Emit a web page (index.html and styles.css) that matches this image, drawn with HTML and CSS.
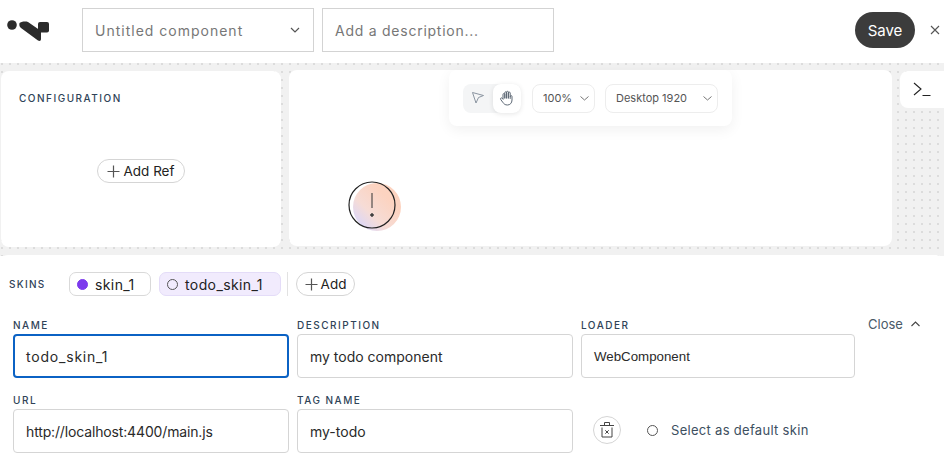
FILE: index.html
```html
<!DOCTYPE html>
<html>

<head>
    <title>Untitled component</title>
    <link rel="stylesheet" href="styles.css">
</head>

<body>
    <header class="topbar">
        <svg class="logo" width="50" height="24" viewBox="0 0 50 24">
            <circle cx="12" cy="7" r="4.800" fill="#2b2b2b" />
            <path d="M19.500 5C20.500 4 25 3 28 4L41 13V21C41 23 39.500 23.500 38 22.500L21 10C19.500 9 19 7 19.500 5z" fill="#2b2b2b" />
            <rect x="38" y="4" width="11" height="10.500" rx="2" fill="#2b2b2b" />
        </svg>
        <div class="name-select">
            <span>Untitled component</span>
            <svg width="10" height="6" viewBox="0 0 10 6"><path d="M1 1l4 4 4-4" fill="none" stroke="#555" stroke-width="1.200" /></svg>
        </div>
        <div class="desc-input">Add a description...</div>
        <button class="save-btn">Save</button>
        <svg class="close-x" width="10" height="10" viewBox="0 0 10 10"><path d="M1 1l8 8M9 1l-8 8" stroke="#555" stroke-width="1.100" /></svg>
    </header>

    <main class="workspace">
        <section class="config-panel">
            <h3 class="config-title">CONFIGURATION</h3>
            <button class="pill add-ref">
                <svg width="13" height="13" viewBox="0 0 13 13"><path d="M6.500 .5v12M.5 6.500h12" stroke="#555" stroke-width="1.200" /></svg>
                Add Ref
            </button>
        </section>

        <section class="canvas-panel">
            <div class="canvas-tools">
                <div class="mode-switch">
                    <span class="mode-btn first">
                        <svg width="14" height="14" viewBox="0 0 14 14"><path d="M1.500 1.500l11 3-5 2-2.500 5.500z" fill="none" stroke="#8a94a0" stroke-width="1" stroke-linejoin="round" /></svg>
                    </span>
                    <span class="mode-btn active">
                        <svg width="16" height="16" viewBox="0 0 16 16"><path d="M4 9V4.500a.9.9 0 0 1 1.800 0V8M5.800 8V2.700a.9.900 0 0 1 1.800 0V8M7.600 8V2.200a.9.900 0 0 1 1.800 0V8M9.400 8V3a.9.900 0 0 1 1.800 0v5.500M11.200 6.500a.9.900 0 0 1 1.800 0V10c0 3-2 5-4.500 5S5 14 3.800 12.300L1.700 9.500c-.8-1.200.8-2.200 1.600-1.200L4 9" fill="none" stroke="#5d6875" stroke-width="1" stroke-linecap="round" stroke-linejoin="round" /></svg>
                    </span>
                </div>
                <div class="tool-select zoom-select">
                    <span>100%</span>
                    <svg width="9" height="5" viewBox="0 0 9 5"><path d="M.5.500l4 3.500 4-3.500" fill="none" stroke="#777" stroke-width="1" /></svg>
                </div>
                <div class="tool-select screen-select">
                    <span>Desktop 1920</span>
                    <svg width="9" height="5" viewBox="0 0 9 5"><path d="M.5.500l4 3.500 4-3.500" fill="none" stroke="#777" stroke-width="1" /></svg>
                </div>
            </div>
            <div class="warning">
                <svg width="54" height="50" viewBox="0 0 54 50">
                    <defs>
                        <linearGradient id="warnFill" x1="0.100" y1="0.900" x2="0.700" y2="0.300">
                            <stop offset="0" stop-color="#d9d6fb" />
                            <stop offset="0.450" stop-color="#f6dcd6" />
                            <stop offset="1" stop-color="#fcd3c0" />
                        </linearGradient>
                    </defs>
                    <circle cx="29" cy="26" r="24" fill="url(#warnFill)" />
                    <circle cx="24" cy="24" r="23" fill="none" stroke="#222" stroke-width="1.200" />
                    <path d="M24 12v15" stroke="#333" stroke-width="1" />
                    <circle cx="24" cy="34" r="1.300" fill="#555" stroke="#333" stroke-width="1" />
                </svg>
            </div>
        </section>

        <button class="console-btn">
            <svg width="18" height="15" viewBox="0 0 18 15"><path d="M1 1l7 6-7 6M9.500 13.500h8" fill="none" stroke="#222" stroke-width="1.100" /></svg>
        </button>
    </main>

    <section class="skins-panel">
        <div class="skins-row">
            <span class="field-label skins-label">SKINS</span>
            <span class="skin-chip"><i class="dot dot-on"></i>skin_1</span>
            <span class="skin-chip selected"><i class="dot"></i>todo_skin_1</span>
            <span class="skins-sep"></span>
            <button class="pill add-skin">
                <svg width="13" height="13" viewBox="0 0 13 13"><path d="M6.500 .5v12M.5 6.500h12" stroke="#555" stroke-width="1.200" /></svg>
                Add
            </button>
        </div>

        <div class="skin-form">
            <div class="field">
                <label class="field-label">NAME</label>
                <div class="text-box focused">todo_skin_1</div>
            </div>
            <div class="field">
                <label class="field-label">DESCRIPTION</label>
                <div class="text-box">my todo component</div>
            </div>
            <div class="field">
                <label class="field-label">LOADER</label>
                <div class="text-box loader-value">WebComponent</div>
            </div>
            <div class="close-link">
                Close
                <svg width="9" height="6" viewBox="0 0 9 6"><path d="M.5 5l4-4 4 4" fill="none" stroke="#444" stroke-width="1.100" /></svg>
            </div>

            <div class="field">
                <label class="field-label">URL</label>
                <div class="text-box url-value">http://localhost:4400/main.js</div>
            </div>
            <div class="field">
                <label class="field-label">TAG NAME</label>
                <div class="text-box">my-todo</div>
            </div>
            <div class="skin-actions">
                <button class="delete-btn">
                    <svg width="16" height="18" viewBox="0 0 16 18"><path d="M1 4.500h14M5.500 4.500V1.500h5v3M3 6.500V16h10V6.500M6.300 9.300l3.400 3.400M9.700 9.300l-3.400 3.400" fill="none" stroke="#444" stroke-width="1" /></svg>
                </button>
                <span class="default-radio"><i class="dot"></i>Select as default skin</span>
            </div>
        </div>
    </section>
</body>

</html>
```

FILE: styles.css
```css
body {
    font-family: "Inter", "Liberation Sans", sans-serif;
    margin: 0;
    width: 944px;
    height: 474px;
    overflow: hidden;
    background-color: white;
    color: #222;
}

.topbar {
    height: 63px;
    box-sizing: border-box;
    display: flex;
    align-items: center;
    padding: 0 0 3px 0;
}

.logo {
    margin-right: 32px;
    flex: none;
}

.name-select {
    width: 232px;
    height: 44px;
    box-sizing: border-box;
    border: 1px solid #d3d3d3;
    padding: 0 13px 0 12px;
    display: flex;
    align-items: center;
    justify-content: space-between;
    font-size: 14px;
    letter-spacing: 1px;
    color: #777;
    margin-right: 8px;
}

.desc-input {
    width: 232px;
    height: 44px;
    box-sizing: border-box;
    border: 1px solid #d3d3d3;
    padding: 0 12px;
    display: flex;
    align-items: center;
    font-size: 14px;
    letter-spacing: 0.75px;
    color: #777;
}

.save-btn {
    margin-left: auto;
    width: 60px;
    height: 36px;
    border: none;
    border-radius: 18px;
    background-color: #3c3c3c;
    color: white;
    font-family: inherit;
    font-size: 15px;
    padding: 0;
}

.close-x {
    margin: 0 4px 0 15px;
}

.workspace {
    height: 193px;
    box-sizing: border-box;
    position: relative;
    display: flex;
    align-items: flex-start;
    padding: 7px 0 0 1px;
    background-color: #f1f1f1;
    background-image: radial-gradient(#dcdcdc 1px, transparent 1.200px);
    background-size: 8px 8px;
    background-position: -2px -3px;
}

.config-panel {
    width: 280px;
    height: 176px;
    box-sizing: border-box;
    margin-top: 1px;
    background-color: white;
    border-radius: 8px;
    padding: 21px 18px 0;
    display: flex;
    flex-direction: column;
}

.config-title {
    margin: 0;
    font-size: 10px;
    font-weight: 500;
    letter-spacing: 1.500px;
    color: #2f4358;
}

.pill {
    display: inline-flex;
    align-items: center;
    justify-content: center;
    gap: 3px;
    height: 24px;
    box-sizing: border-box;
    border: 1px solid #d5d5d5;
    border-radius: 12px;
    background-color: white;
    font-family: inherit;
    font-size: 13.500px;
    color: #222;
    padding: 0;
}

.add-ref {
    width: 88px;
    margin: 55px 0 0 78px;
}

.canvas-panel {
    width: 603px;
    height: 176px;
    margin-left: 8px;
    position: relative;
    background-color: white;
    border-radius: 8px;
}

.canvas-tools {
    position: absolute;
    left: 160px;
    top: 0;
    width: 283px;
    height: 56px;
    box-sizing: border-box;
    padding: 14px;
    display: flex;
    align-items: center;
    background-color: white;
    border-radius: 8px;
    box-shadow: 0 4px 14px rgba(0, 0, 0, 0.06);
}

.mode-switch {
    display: flex;
    background-color: #f4f5f6;
    border-radius: 8px;
    height: 29px;
    margin-right: 11px;
}

.mode-btn {
    width: 28px;
    height: 29px;
    display: flex;
    align-items: center;
    justify-content: center;
    border-radius: 8px;
}

.mode-btn.first {
    width: 30px;
}

.mode-btn.active {
    background-color: white;
    box-shadow: 0 1px 5px rgba(0, 0, 0, 0.1);
}

.tool-select {
    height: 29px;
    box-sizing: border-box;
    border: 1px solid #ededed;
    border-radius: 8px;
    display: flex;
    align-items: center;
    justify-content: space-between;
    padding: 0 5px 0 10px;
    font-size: 11px;
    color: #555;
}

.zoom-select {
    width: 63px;
    margin-right: 10px;
}

.screen-select {
    width: 113px;
}

.warning {
    position: absolute;
    left: 59px;
    top: 111px;
    line-height: 0;
}

.console-btn {
    width: 44px;
    height: 37px;
    margin: 1px 0 0 8px;
    border: none;
    border-radius: 8px 0 0 8px;
    background-color: white;
    padding: 0;
    display: flex;
    align-items: center;
    justify-content: center;
}

.skins-panel {
    height: 218px;
    box-sizing: border-box;
    position: relative;
    margin-top: -1px;
    padding: 17px 0 0 9px;
    background-color: white;
    border-radius: 8px 8px 0 0;
}

.skins-row {
    display: flex;
    align-items: center;
    height: 24px;
}

.field-label {
    display: block;
    font-size: 10px;
    font-weight: 500;
    letter-spacing: 1.500px;
    color: #2f4358;
    line-height: 12px;
}

.skins-label {
    width: 60px;
    letter-spacing: 1.300px;
}

.skin-chip {
    display: inline-flex;
    align-items: center;
    gap: 7px;
    height: 24px;
    box-sizing: border-box;
    padding: 0 0 0 7px;
    width: 82px;
    border: 1px solid #d9d9d9;
    border-radius: 7px;
    font-size: 14px;
    letter-spacing: 0.400px;
    margin-right: 8px;
}

.skin-chip.selected {
    width: 122px;
    background-color: #f1ebfd;
    border-color: #e4dcf8;
    margin-right: 6px;
}

.dot {
    display: inline-block;
    width: 11px;
    height: 11px;
    box-sizing: border-box;
    border: 1px solid #555;
    border-radius: 50%;
}

.dot-on {
    background-color: #7c3aed;
    border-color: #7c3aed;
}

.skins-sep {
    width: 1px;
    height: 24px;
    background-color: #e2e2e2;
    margin-right: 8px;
}

.add-skin {
    width: 59px;
}

.skin-form {
    display: grid;
    grid-template-columns: 276px 276px 274px auto;
    column-gap: 8px;
    row-gap: 16px;
    margin: 23px 0 0 4px;
}

.text-box {
    height: 44px;
    box-sizing: border-box;
    margin-top: 3px;
    border: 1px solid #d5d5d5;
    border-radius: 4px;
    padding: 0 12px;
    display: flex;
    align-items: center;
    font-size: 14px;
    color: #2a2a2a;
}

.text-box.focused {
    border: 2px solid #0b62c4;
    padding: 0 11px;
    letter-spacing: 0.800px;
}

.url-value {
    letter-spacing: -0.150px;
}

.loader-value {
    font-family: "Liberation Sans", sans-serif;
    font-size: 13.300px;
}

.close-link {
    display: flex;
    align-items: center;
    gap: 8px;
    align-self: start;
    height: 14px;
    margin: -2px 0 0 5px;
    font-size: 13px;
    color: #4a5a68;
}

.skin-actions {
    grid-column: span 2;
    display: flex;
    align-items: center;
    padding: 13px 0 0 12px;
}

.delete-btn {
    width: 28px;
    height: 28px;
    border: 1px solid #d5d5d5;
    border-radius: 50%;
    background-color: white;
    padding: 0;
    display: flex;
    align-items: center;
    justify-content: center;
    margin-right: 26px;
}

.default-radio {
    display: inline-flex;
    align-items: center;
    gap: 13px;
    font-size: 13px;
    letter-spacing: 0.300px;
    color: #3d4f5f;
}
```
